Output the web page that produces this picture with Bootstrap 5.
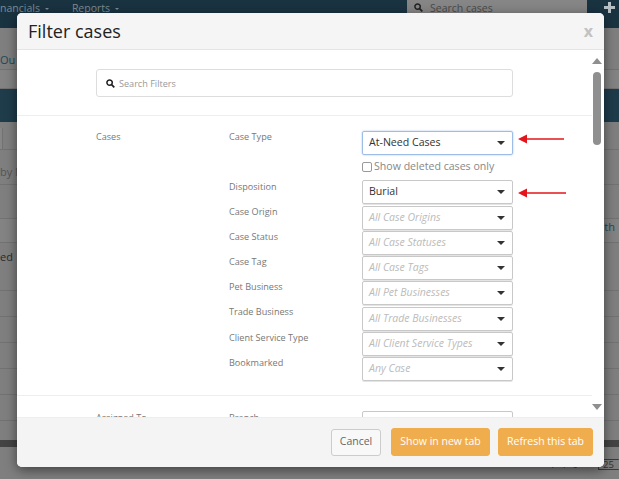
<!DOCTYPE html>
<html lang="en">
<head>
<meta charset="utf-8">
<title>Filter cases</title>
<link rel="stylesheet" href="https://cdn.jsdelivr.net/npm/bootstrap@5.3.0/dist/css/bootstrap.min.css">
<style>
html,body{height:100%;overflow:hidden}
body{font-family:"Open Sans","Noto Sans",sans-serif;background:#7f7f7f;font-size:10px;color:#333}
.page-shell{height:479px;position:relative;overflow:hidden}
.top-bar{height:28px;background:#1a3341;color:#7d8b92;font-size:10.5px}
.nav-txt{white-space:nowrap}
.nav-left{gap:23px;padding-top:0;line-height:17px}
.nav-car{display:inline-block;width:0;height:0;border-left:2px solid transparent;border-right:2px solid transparent;border-top:2px solid #7d8b92;margin-left:5px;vertical-align:middle}
.case-search{width:180px;height:15px;background:#868686;color:#4a4a4a;margin-left:auto;margin-right:32px;padding-left:7px;font-size:10.5px;line-height:16px;gap:7px}
.plus-mark{color:#b6bfc4;position:absolute;right:4px;top:2px;display:block}
.bg-row{background:#7f7f7f;border-bottom:1px solid #727272;color:#2b2b2b;font-size:11px}
.row-a{height:42px;color:#22475a;padding-top:24px;line-height:16px}
.row-b{height:19px;background:#838383}
.row-teal{background:#1f3c4b;height:33px;border:0}
.row-c{height:28px;padding-top:6px}
.row-tab{width:3px;height:21px;background:#868686;border-right:1px solid #727272}
.row-d{height:35px;color:#555;line-height:44px}
.row-e{height:34px}
.row-f{height:24px;background:#838383}
.row-g{height:48px;line-height:28px}
.row-h{height:26px}
.row-i{height:19px;border:0}
.row-bar{height:7px;background:#444;border:0}
.bg-th{color:#22475a;margin-right:4px}
.pager-row{margin-top:12px;gap:6px;font-size:9.5px;line-height:11px;color:#333}
.pager-num{line-height:11px}
.pager-box{border:1px solid #3a3a3a;border-right:0;border-radius:1px;width:21px;height:11px;line-height:10px;margin-left:14px;padding-left:4px}
.filter-dialog{position:absolute;left:17px;top:13px;width:587px;height:454px;background:#fff;border-radius:5px;box-shadow:0 3px 12px rgba(0,0,0,.5);display:flex;flex-direction:column;overflow:hidden}
.dialog-head{height:37px;background:#f5f5f5;border-bottom:1px solid #e5e5e5;flex:none;padding:0 11px}
.dialog-head h1{font-size:18px;font-weight:400;color:#222;margin:0;line-height:36px}
.dialog-x{color:#c2c2c2;font-size:16px;font-weight:700;line-height:36px;margin-right:0}
.dialog-body{flex:1;overflow:hidden;position:relative;min-height:0}
.search-zone{height:66px;border-bottom:1px solid #eee;margin-right:12px;padding:19px 79px 0}
.filter-search{height:28px;border:1px solid #ddd;border-radius:3px;color:#999;font-size:9.1px;padding:1px 0 0 9px;gap:4px;width:417px}
.filter-group{padding:0 0 0 79px;margin-right:12px}
.group-main{height:280px;border-bottom:1px solid #eee}
.col-group{width:133px;color:#777;font-size:9.1px;padding-top:14px;flex:none}
.col-labels{width:133px;color:#777;font-size:9.1px;flex:none;padding-top:14px}
.col-labels div{height:25.2px;white-space:nowrap}
.col-labels .spacer-row{height:49.5px}
.col-fields{width:151px;flex:none;padding-top:15px}
.fake-select{height:24px;border:1px solid #c8c8c8;border-radius:2px;margin-bottom:1.25px;padding:0 6px;font-size:10.6px;color:#333;box-shadow:0 1px 0 #e4e4e4}
.fake-select.is-focus{border-color:#9dbde6;box-shadow:0 0 2px #9dbde6}
.fake-select.is-empty{color:#bbb;font-style:italic;font-size:10.5px}
.sel-caret{width:0;height:0;border-left:4px solid transparent;border-right:4px solid transparent;border-top:4px solid #333;margin-right:1px}
.deleted-row{height:24px;color:#888;font-size:10.6px;gap:2px;margin-top:0;padding-bottom:2px}
.deleted-box{width:10px;height:10px;border:1px solid #999;border-radius:2px;display:inline-block}
.next-group{padding-top:15px}
.dialog-foot{height:50px;background:#f4f4f4;border-top:1px solid #eee;flex:none;padding:0 11px 1px;gap:8px}
.btn-cancel-x{height:27px;width:50px;padding:0;font-size:10.5px;color:#666;background:#f8f8f8;border:1px solid #ccc;border-radius:3px;margin-right:2px}
.btn-amber{height:28px;padding:0;font-size:10.5px;color:#fff;background:#f0ad4e;border:1px solid #f0ad4e;border-radius:3px}
.bw-a{width:99px}.bw-b{width:95px}
.scroll-track{position:absolute;right:0;top:0;bottom:0;width:14px}
.scroll-thumb{position:absolute;left:3px;top:22px;width:8px;height:73px;background:#8f8f8f;border-radius:4px}
.scroll-up,.scroll-down{position:absolute;left:2px;width:0;height:0;border-left:5px solid transparent;border-right:5px solid transparent}
.scroll-up{top:8px;border-bottom:6px solid #8f8f8f}
.scroll-down{bottom:7px;border-top:6px solid #8f8f8f}
.anno-arrow{position:absolute;display:block}
</style>
</head>
<body>
<div class="page-shell">
  <div class="top-bar d-flex position-relative">
    <div class="d-flex nav-left"><span class="nav-txt">nancials<i class="nav-car"></i></span><span class="nav-txt">Reports<i class="nav-car"></i></span></div>
    <div class="case-search d-flex align-items-center">
      <svg width="9" height="9" viewBox="0 0 10 10"><circle cx="4" cy="4" r="3" fill="none" stroke="#222" stroke-width="1.7"/><path d="M6.2 6.2 9.2 9.2" stroke="#222" stroke-width="2"/></svg>
      <span>Search cases</span>
    </div>
    <svg class="plus-mark" width="11" height="11" viewBox="0 0 11 11"><path d="M5.5 0V11M0 5.5H11" stroke="#b6bfc4" stroke-width="3"/></svg>
  </div>
  <div class="bg-row row-a">Ou</div>
  <div class="bg-row row-b"></div>
  <div class="row-teal"></div>
  <div class="bg-row row-c"><div class="row-tab"></div></div>
  <div class="bg-row row-d">by N</div>
  <div class="bg-row row-e"></div>
  <div class="bg-row row-f d-flex"><span class="ms-auto bg-th">th</span></div>
  <div class="bg-row row-g">ed</div>
  <div class="bg-row row-h"></div>
  <div class="bg-row row-h"></div>
  <div class="bg-row row-h"></div>
  <div class="bg-row row-h"></div>
  <div class="bg-row row-h"></div>
  <div class="bg-row row-i"></div>
  <div class="row-bar"></div>
  <div class="pager-row d-flex justify-content-end">
    <span class="pager-num">1</span><span class="pager-num">1</span><span class="pager-num">0</span>
    <div class="pager-box">25</div>
  </div>
  <div class="filter-dialog">
    <div class="dialog-head d-flex justify-content-between align-items-center">
      <h1>Filter cases</h1>
      <span class="dialog-x">x</span>
    </div>
    <div class="dialog-body">
      <div class="search-zone">
        <div class="filter-search d-flex align-items-center">
          <svg width="9" height="9" viewBox="0 0 10 10"><circle cx="4" cy="4" r="3" fill="none" stroke="#222" stroke-width="1.7"/><path d="M6.2 6.2 9.2 9.2" stroke="#222" stroke-width="2"/></svg>
          <span>Search Filters</span>
        </div>
      </div>
      <div class="filter-group group-main d-flex">
        <div class="col-group">Cases</div>
        <div class="col-labels">
          <div class="spacer-row">Case Type</div>
          <div>Disposition</div><div>Case Origin</div><div>Case Status</div><div>Case Tag</div><div>Pet Business</div><div>Trade Business</div><div>Client Service Type</div><div>Bookmarked</div>
        </div>
        <div class="col-fields">
          <div class="fake-select is-focus d-flex justify-content-between align-items-center"><span>At-Need Cases</span><i class="sel-caret"></i></div>
          <div class="deleted-row d-flex align-items-center"><i class="deleted-box"></i><span>Show deleted cases only</span></div>
          <div class="fake-select d-flex justify-content-between align-items-center"><span>Burial</span><i class="sel-caret"></i></div>
          <div class="fake-select is-empty d-flex justify-content-between align-items-center"><span>All Case Origins</span><i class="sel-caret"></i></div>
          <div class="fake-select is-empty d-flex justify-content-between align-items-center"><span>All Case Statuses</span><i class="sel-caret"></i></div>
          <div class="fake-select is-empty d-flex justify-content-between align-items-center"><span>All Case Tags</span><i class="sel-caret"></i></div>
          <div class="fake-select is-empty d-flex justify-content-between align-items-center"><span>All Pet Businesses</span><i class="sel-caret"></i></div>
          <div class="fake-select is-empty d-flex justify-content-between align-items-center"><span>All Trade Businesses</span><i class="sel-caret"></i></div>
          <div class="fake-select is-empty d-flex justify-content-between align-items-center"><span>All Client Service Types</span><i class="sel-caret"></i></div>
          <div class="fake-select is-empty d-flex justify-content-between align-items-center"><span>Any Case</span><i class="sel-caret"></i></div>
        </div>
      </div>
      <div class="filter-group next-group d-flex">
        <div class="col-group" style="padding-top:0">Assigned To</div>
        <div class="col-labels" style="padding-top:0"><div>Branch</div></div>
        <div class="col-fields" style="padding-top:0"><div class="fake-select"></div></div>
      </div>
      <div class="scroll-track"><i class="scroll-up"></i><i class="scroll-thumb"></i><i class="scroll-down"></i></div>
      <svg class="anno-arrow" style="left:501px;top:83px" width="47" height="12" viewBox="0 0 47 12"><path d="M8 6H46" stroke="#e3141b" stroke-width="1.6"/><path d="M0 6 9 1.5V10.5Z" fill="#e3141b"/></svg>
      <svg class="anno-arrow" style="left:501px;top:137px" width="49" height="12" viewBox="0 0 49 12"><path d="M8 6H48" stroke="#e3141b" stroke-width="1.6"/><path d="M0 6 9 1.5V10.5Z" fill="#e3141b"/></svg>
    </div>
    <div class="dialog-foot d-flex justify-content-end align-items-center">
      <button type="button" class="btn btn-cancel-x">Cancel</button>
      <button type="button" class="btn btn-amber bw-a">Show in new tab</button>
      <button type="button" class="btn btn-amber bw-b">Refresh this tab</button>
    </div>
  </div>
</div>
<script src="https://cdn.jsdelivr.net/npm/bootstrap@5.3.0/dist/js/bootstrap.bundle.min.js"></script>
</body>
</html>
